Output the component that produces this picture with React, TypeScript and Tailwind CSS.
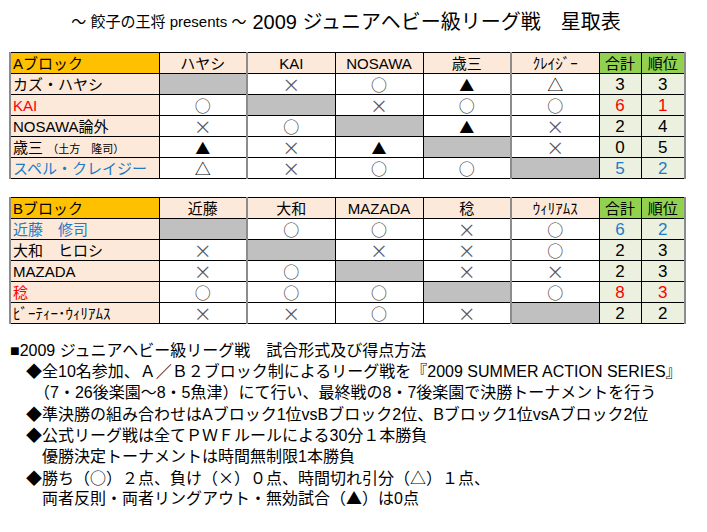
import type { ReactNode } from "react";

type Row = {
  name: ReactNode;
  nameColor?: string;
  res: string[];
  pt: string;
  rank: string;
  numColor?: string;
};

type Block = {
  head: string[];
  rows: Row[];
};

const blockA: Block = {
  head: ["Aブロック", "ハヤシ", "KAI", "NOSAWA", "歳三", "ｸﾚｲｼﾞｰ"],
  rows: [
    { name: "カズ・ハヤシ", res: ["", "×", "○", "▲", "△"], pt: "3", rank: "3" },
    { name: "KAI", nameColor: "text-[#ff0000]", res: ["○", "", "×", "○", "○"], pt: "6", rank: "1", numColor: "text-[#ff0000]" },
    { name: "NOSAWA論外", res: ["×", "○", "", "▲", "×"], pt: "2", rank: "4" },
    {
      name: (
        <>
          歳三 <span className="text-[11px]">（土方　隆司）</span>
        </>
      ),
      res: ["▲", "×", "▲", "", "×"],
      pt: "0",
      rank: "5",
    },
    { name: "スペル・クレイジー", nameColor: "text-[#1f7bc8]", res: ["△", "×", "○", "○", ""], pt: "5", rank: "2", numColor: "text-[#1f7bc8]" },
  ],
};

const blockB: Block = {
  head: ["Bブロック", "近藤", "大和", "MAZADA", "稔", "ｳｨﾘｱﾑｽ"],
  rows: [
    { name: "近藤　修司", nameColor: "text-[#1f7bc8]", res: ["", "○", "○", "×", "○"], pt: "6", rank: "2", numColor: "text-[#1f7bc8]" },
    { name: "大和　ヒロシ", res: ["×", "", "×", "×", "○"], pt: "2", rank: "3" },
    { name: "MAZADA", res: ["×", "○", "", "×", "×"], pt: "2", rank: "3" },
    { name: "稔", nameColor: "text-[#ff0000]", res: ["○", "○", "○", "", "○"], pt: "8", rank: "3", numColor: "text-[#ff0000]" },
    { name: "ﾋﾞｰﾃｨｰ･ｳｨﾘｱﾑｽ", res: ["×", "×", "○", "×", ""], pt: "2", rank: "2" },
  ],
};

// grey double-pixel lines after the 1st and 4th opponent columns
const sep = (i: number) => (i === 0 || i === 3 ? "border-r-2 border-r-[#8c8c8c]" : "");

function symStyle(s: string) {
  if (s === "×") return "text-[18px] text-[#5a5a6a]";
  if (s === "○") return "text-[16px] text-[#333]";
  if (s === "△") return "text-[16px] text-black";
  return "text-[15px] text-black";
}

function Table({ block }: { block: Block }) {
  return (
    <table className="table-fixed border-collapse border-l-2 border-l-[#8c8c8c] border-r-2 border-r-[#8c8c8c] text-[15px] text-black">
      <colgroup>
        <col className="w-[149px]" />
        <col className="w-[88px]" />
        <col className="w-[88px]" />
        <col className="w-[88px]" />
        <col className="w-[88px]" />
        <col className="w-[88px]" />
        <col className="w-[42px]" />
        <col className="w-[44px]" />
      </colgroup>
      <thead>
        <tr className="h-[21px]">
          <th className="border border-black bg-[#ffc000] px-[2px] text-left font-normal leading-none">
            {block.head[0]}
          </th>
          {block.head.slice(1).map((h, i) => (
            <th
              key={h}
              className={`border border-black bg-[#fde9d9] p-0 text-center font-normal leading-none ${sep(i)}`}
            >
              {h}
            </th>
          ))}
          <th className="border border-black bg-[#92d050] p-0 text-center font-normal leading-none">合計</th>
          <th className="border border-black bg-[#92d050] p-0 text-center font-normal leading-none">順位</th>
        </tr>
      </thead>
      <tbody>
        {block.rows.map((r, ri) => (
          <tr key={ri} className="h-[21px]">
            <td className={`whitespace-nowrap border border-black bg-[#fde9d9] px-[2px] leading-none ${r.nameColor ?? ""}`}>
              {r.name}
            </td>
            {r.res.map((s, i) => (
              <td
                key={i}
                className={`h-[21px] border border-black p-0 text-center leading-none font-['Noto_Sans_CJK_JP',sans-serif] ${
                  s === "" ? "bg-[#c0c0c0]" : "bg-white"
                } ${symStyle(s)} ${sep(i)}`}
              >
                {s}
              </td>
            ))}
            <td className={`border border-black bg-[#ebf1de] p-0 text-center text-[17px] leading-none ${r.numColor ?? ""}`}>
              {r.pt}
            </td>
            <td className={`border border-black bg-[#ebf1de] p-0 text-center text-[17px] leading-none ${r.numColor ?? ""}`}>
              {r.rank}
            </td>
          </tr>
        ))}
      </tbody>
    </table>
  );
}

// marks inside the running text come from the CJK font so they are full size
function Mark({ children }: { children: ReactNode }) {
  return <span className="font-['Noto_Sans_CJK_JP',sans-serif] text-[16px] leading-none">{children}</span>;
}

export default function App() {
  return (
    <div className="h-[532px] w-[707px] overflow-hidden bg-white font-['Liberation_Sans','Noto_Sans_CJK_JP',sans-serif] text-black">
      <div className="flex h-[42px] w-[692px] items-center justify-center whitespace-nowrap pt-[2px]">
        <span className="mr-[6px] text-[15px]">～ 餃子の王将 presents ～</span>
        <span className="text-[20px]">2009 ジュニアヘビー級リーグ戦　星取表</span>
      </div>
      <div className="pl-[9px] pt-[10px]">
        <Table block={blockA} />
      </div>
      <div className="pl-[9px] pt-[18px]">
        <Table block={blockB} />
      </div>
      <div className="pt-[17px] text-[16px] whitespace-nowrap">
        <div className="flex h-[20px] items-center pl-[10px]">■2009 ジュニアヘビー級リーグ戦　試合形式及び得点方法</div>
        <div className="flex h-[21px] items-center pl-[26px]">◆全10名参加、Ａ／Ｂ２ブロック制によるリーグ戦を『2009 SUMMER ACTION SERIES』</div>
        <div className="flex h-[22px] items-center pl-[34px]">（7・26後楽園～8・5魚津）にて行い、最終戦の8・7後楽園で決勝トーナメントを行う</div>
        <div className="flex h-[22px] items-center pl-[26px]">◆準決勝の組み合わせはAブロック1位vsBブロック2位、Bブロック1位vsAブロック2位</div>
        <div className="flex h-[20px] items-center pl-[26px]">◆公式リーグ戦は全てＰＷＦルールによる30分１本勝負</div>
        <div className="flex h-[22px] items-center pl-[42px]">優勝決定トーナメントは時間無制限1本勝負</div>
        <div className="flex h-[21px] items-center pl-[26px]">
          <span>
            ◆勝ち（<Mark>○</Mark>）２点、負け（<Mark>×</Mark>）０点、時間切れ引分（<Mark>△</Mark>）１点、
          </span>
        </div>
        <div className="flex h-[20px] items-center pl-[42px]">
          <span>
            両者反則・両者リングアウト・無効試合（<Mark>▲</Mark>）は0点
          </span>
        </div>
      </div>
    </div>
  );
}
